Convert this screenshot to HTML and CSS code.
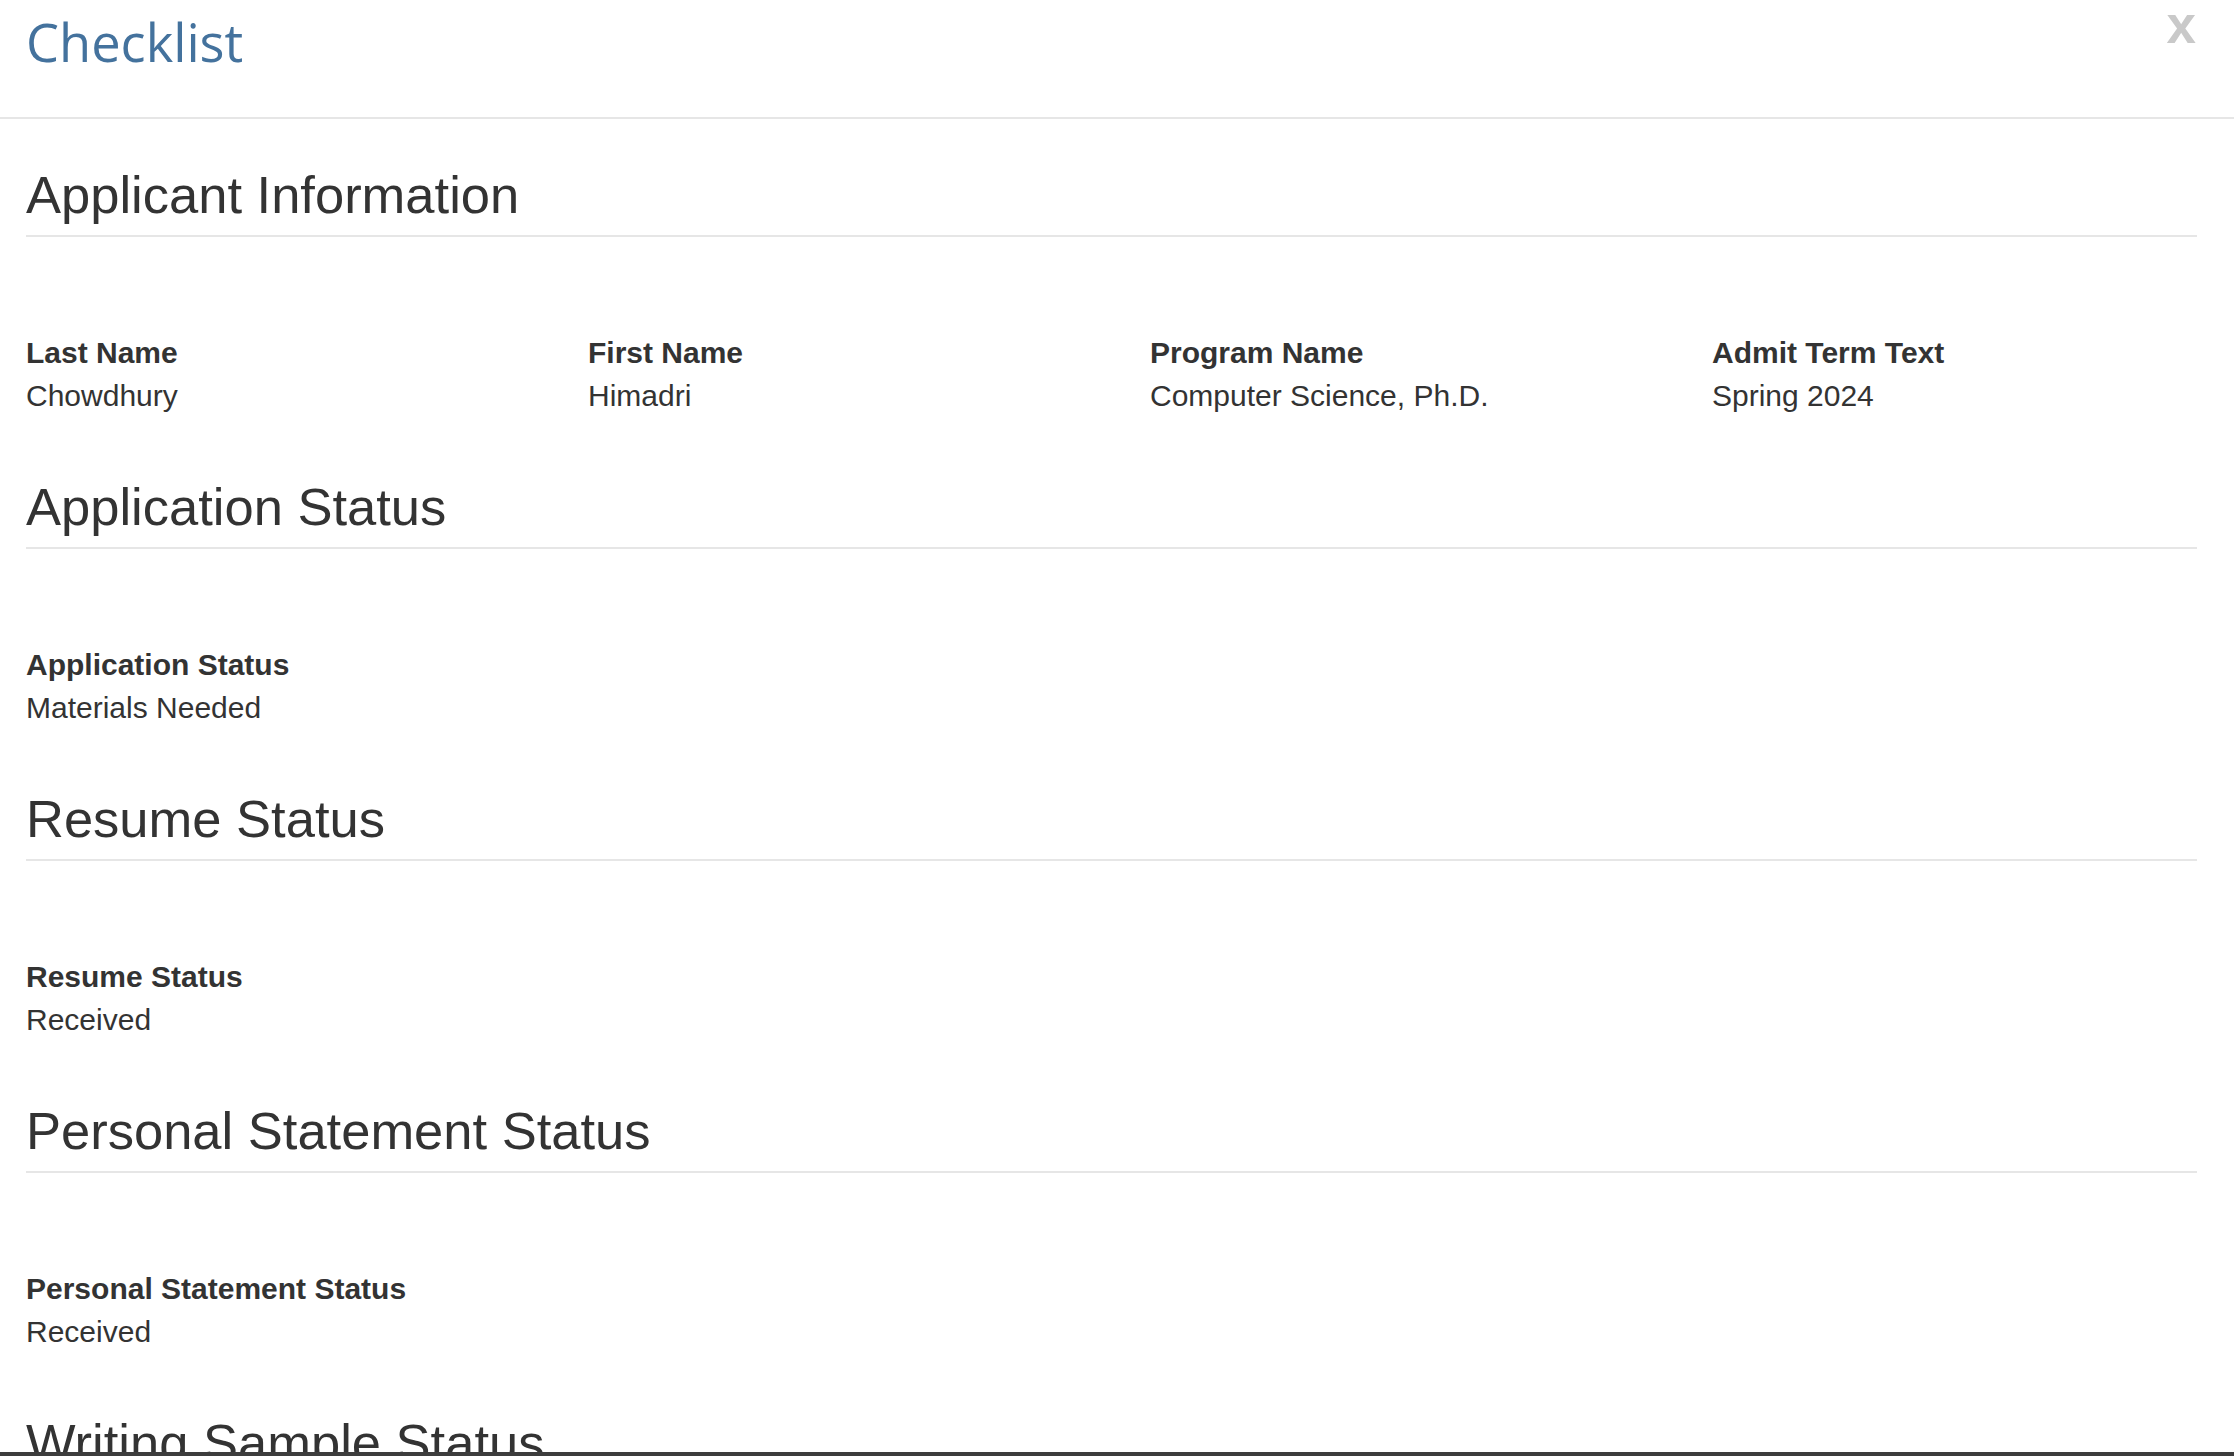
FILE: index.html
```html
<!DOCTYPE html>
<html lang="en">
<head>
<meta charset="utf-8">
<title>Checklist</title>
<link rel="stylesheet" href="styles.css">
</head>
<body>
<div class="modal">
  <header class="modal-header">
    <h1 class="modal-title">Checklist</h1>
    <span class="close">x</span>
  </header>
  <main class="modal-body">
    <section class="group">
      <h2 class="group-title">Applicant Information</h2>
      <div class="fields">
        <div class="field"><div class="label">Last Name</div><div class="value">Chowdhury</div></div>
        <div class="field"><div class="label">First Name</div><div class="value">Himadri</div></div>
        <div class="field"><div class="label">Program Name</div><div class="value">Computer Science, Ph.D.</div></div>
        <div class="field"><div class="label">Admit Term Text</div><div class="value">Spring 2024</div></div>
      </div>
    </section>
    <section class="group">
      <h2 class="group-title">Application Status</h2>
      <div class="fields">
        <div class="field"><div class="label">Application Status</div><div class="value">Materials Needed</div></div>
      </div>
    </section>
    <section class="group">
      <h2 class="group-title">Resume Status</h2>
      <div class="fields">
        <div class="field"><div class="label">Resume Status</div><div class="value">Received</div></div>
      </div>
    </section>
    <section class="group">
      <h2 class="group-title">Personal Statement Status</h2>
      <div class="fields">
        <div class="field"><div class="label">Personal Statement Status</div><div class="value">Received</div></div>
      </div>
    </section>
    <section class="group">
      <h2 class="group-title">Writing Sample Status</h2>
      <div class="fields">
        <div class="field"><div class="label">Writing Sample Status</div><div class="value">Received</div></div>
      </div>
    </section>
  </main>
  <div class="bottom-bar"></div>
</div>
</body>
</html>
```

FILE: styles.css
```css
html, body {
  margin: 0;
  padding: 0;
  overflow: hidden;
  background: #ffffff;
}

body {
  font-family: "Liberation Sans", Arial, Helvetica, sans-serif;
  color: #333333;
  height: 1456px;
}

.modal {
  height: 1456px;
  overflow: hidden;
}

.modal-header {
  display: flex;
  justify-content: space-between;
  align-items: flex-start;
  height: 117px;
  box-sizing: content-box;
  padding: 0 38px 0 26px;
  border-bottom: 2px solid #e6e6e6;
}

.modal-title {
  margin: 0;
  padding-top: 7px;
  font-family: "Open Sans", "Liberation Sans", sans-serif;
  font-weight: 400;
  font-size: 52.4px;
  line-height: 70px;
  color: #44729d;
}

.close {
  font-family: "Liberation Sans", Arial, sans-serif;
  font-weight: 700;
  font-size: 53px;
  line-height: 49px;
  color: #c9c9c9;
}

.modal-body {
  padding: 0 37px 0 26px;
}

.group {
  margin-top: 62px;
}

.group:first-child {
  margin-top: 47px;
}

.group-title {
  margin: 0;
  padding-bottom: 12px;
  font-weight: 400;
  font-size: 52.5px;
  line-height: 57px;
  color: #333333;
  border-bottom: 2px solid #e6e6e6;
}

.fields {
  display: grid;
  grid-template-columns: 562px 562px 562px 1fr;
  margin-top: 96px;
}

.label {
  font-weight: 700;
  font-size: 30px;
  line-height: 40px;
}

.value {
  margin-top: 3px;
  font-weight: 400;
  font-size: 30px;
  line-height: 40px;
}

.bottom-bar {
  position: fixed;
  left: 0;
  right: 0;
  bottom: 0;
  height: 4px;
  background: #3d3d3d;
}
```
